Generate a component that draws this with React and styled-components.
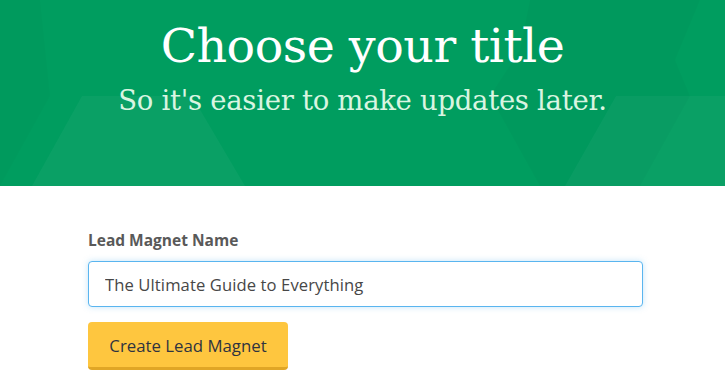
import React from "react";
import styled, { createGlobalStyle } from "styled-components";

const Global = createGlobalStyle`
  html, body { margin: 0; padding: 0; background: #ffffff; }
  body { font-family: "Open Sans", "Noto Sans", sans-serif; }
  * { box-sizing: border-box; }
`;

const Hero = styled.header`
  position: relative;
  height: 186px;
  background: #009d5f;
  overflow: hidden;
  display: flex;
  flex-direction: column;
  align-items: center;
  padding-top: 16px;
`;

const Pattern = styled.svg`
  position: absolute;
  inset: 0;
  width: 100%;
  height: 100%;
`;

const Title = styled.h1`
  position: relative;
  margin: 0;
  font-family: "DejaVu Serif", "Liberation Serif", serif;
  font-weight: 400;
  font-size: 47.5px;
  line-height: 60px;
  letter-spacing: -0.5px;
  color: #ffffff;
`;

const Subtitle = styled.p`
  position: relative;
  margin: 7px 0 0;
  font-family: "DejaVu Serif", "Liberation Serif", serif;
  font-weight: 400;
  font-size: 27.5px;
  line-height: 34px;
  letter-spacing: -0.3px;
  color: #d9f5e1;
`;

const Form = styled.main`
  display: flex;
  flex-direction: column;
  align-items: flex-start;
  padding: 44px 0 0 88px;
`;

const Label = styled.label`
  font-family: "Open Sans", sans-serif;
  font-weight: 700;
  font-size: 15.5px;
  line-height: 20px;
  color: #595959;
`;

const Input = styled.input`
  margin-top: 11px;
  width: 555px;
  height: 46px;
  padding: 0 16px;
  border: 1px solid #5ab5ef;
  border-radius: 4px;
  box-shadow: 0 0 6px rgba(90, 181, 239, 0.35);
  font-family: "Open Sans", sans-serif;
  font-size: 16.6px;
  letter-spacing: 0.1px;
  color: #474747;
  caret-color: #333;
  outline: none;
  background: #fff;
`;

const Button = styled.button`
  margin-top: 15px;
  width: 200px;
  height: 48px;
  border: none;
  border-bottom: 3px solid #e0a626;
  border-radius: 4px;
  background: #fec63f;
  font-family: "Open Sans", sans-serif;
  font-size: 16.8px;
  color: #2f3340;
  padding: 2px 0 0;
  cursor: pointer;
`;

export default function App() {
  return (
    <>
      <Global />
      <Hero>
        <Pattern viewBox="0 0 725 186" preserveAspectRatio="none" aria-hidden="true">
          <polygon points="82,96 192,96 245,186 32,186" fill="#ffffff" fillOpacity="0.04" />
          <polygon points="616,96 725,96 725,186 565,186" fill="#ffffff" fillOpacity="0.04" />
          <polygon points="530,0 700,0 675,60 690,96 640,186 540,186 490,96 520,50" fill="#000000" fillOpacity="0.02" />
          <polygon points="0,0 40,0 50,96 0,186" fill="#000000" fillOpacity="0.015" />
        </Pattern>
        <Title>Choose your title</Title>
        <Subtitle>So it's easier to make updates later.</Subtitle>
      </Hero>
      <Form>
        <Label htmlFor="lm-name">Lead Magnet Name</Label>
        <Input id="lm-name" defaultValue="The Ultimate Guide to Everything" autoFocus />
        <Button type="button">Create Lead Magnet</Button>
      </Form>
    </>
  );
}
